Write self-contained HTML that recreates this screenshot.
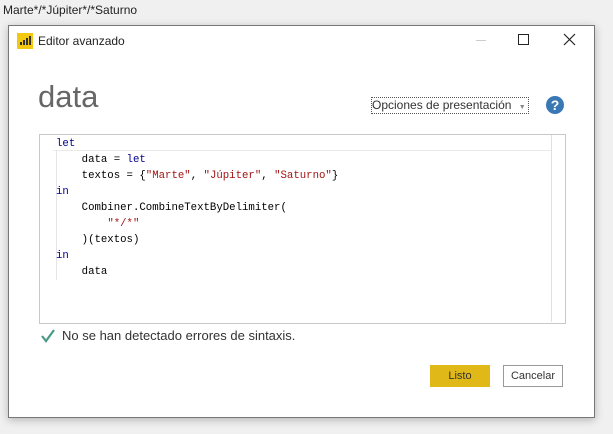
<!DOCTYPE html>
<html><head><meta charset="utf-8"><style>
body{margin:0;width:613px;height:434px;background:#f0f0f0;font-family:"Liberation Sans",sans-serif;position:relative;overflow:hidden}
.a{position:absolute}
.code{font-family:"Liberation Mono",monospace;font-size:10.7px;color:#000;white-space:pre;line-height:16px}
.k{color:#00008b}.s{color:#a31515}
</style></head><body>
<div class="a" style="left:3px;top:3px;font-size:12px;color:#222">Marte*/*Júpiter*/*Saturno</div>
<div class="a" style="left:8px;top:25px;width:585px;height:391px;background:#fff;border:1px solid #777;box-shadow:0 2px 8px rgba(0,0,0,.25)"></div>
<div class="a" style="left:17px;top:33px;width:16px;height:16px;background:#f2c811"></div>
<svg class="a" style="left:17px;top:33px" width="16" height="16"><rect x="3" y="9" width="2" height="3" fill="#333"/><rect x="6" y="7" width="2" height="5" fill="#333"/><rect x="9" y="5" width="2" height="7" fill="#333"/><rect x="12" y="3" width="2" height="9" fill="#333"/></svg>
<div class="a" style="left:38px;top:34px;font-size:12px;color:#222">Editor avanzado</div>
<div class="a" style="left:476px;top:40px;width:10px;height:1px;background:#ccc"></div>
<div class="a" style="left:518px;top:34px;width:9px;height:9px;border:1px solid #222"></div>
<svg class="a" style="left:563px;top:33px" width="13" height="13"><path d="M1 1L12 12M12 1L1 12" stroke="#222" stroke-width="1.2"/></svg>
<div class="a" style="left:38px;top:79px;font-size:31px;color:#666">data</div>
<div class="a" style="left:371px;top:97px;width:156px;height:15px;border:1px dotted #555;font-size:12px;color:#333;line-height:15px">Opciones de presentación <span style="font-size:7px;color:#888;margin-left:4px">▼</span></div>
<div class="a" style="left:546px;top:96px;width:18px;height:18px;border-radius:50%;background:#3a78b5;color:#fff;font-weight:bold;font-size:14px;text-align:center;line-height:18px">?</div>
<div class="a" style="left:39px;top:134px;width:525px;height:188px;border:1px solid #c8c8c8"></div>
<div class="a" style="left:53px;top:135px;width:498px;height:15px;border-bottom:1px solid #eaeaea"></div>
<div class="a" style="left:551px;top:135px;width:1px;height:187px;background:#e0e0e0"></div>
<div class="a" style="left:56px;top:150px;width:1px;height:130px;background:#e5e5e5"></div>
<div class="a code" style="left:56px;top:136px"><span class="k">let</span>
    data = <span class="k">let</span>
    textos = {<span class="s">"Marte"</span>, <span class="s">"Júpiter"</span>, <span class="s">"Saturno"</span>}
<span class="k">in</span>
    Combiner.CombineTextByDelimiter(
        <span class="s">"*/*"</span>
    )(textos)
<span class="k">in</span>
    data</div>
<svg class="a" style="left:40px;top:328px" width="16" height="16"><path d="M2 8L6 13L14 2" stroke="#4a9a88" stroke-width="2.2" fill="none"/></svg>
<div class="a" style="left:62px;top:328px;font-size:13px;color:#333">No se han detectado errores de sintaxis.</div>
<div class="a" style="left:430px;top:365px;width:60px;height:22px;background:#e0b818;font-size:11px;color:#333;text-align:center;line-height:22px">Listo</div>
<div class="a" style="left:503px;top:365px;width:58px;height:20px;border:1px solid #999;font-size:11px;color:#333;text-align:center;line-height:20px">Cancelar</div>
</body></html>
